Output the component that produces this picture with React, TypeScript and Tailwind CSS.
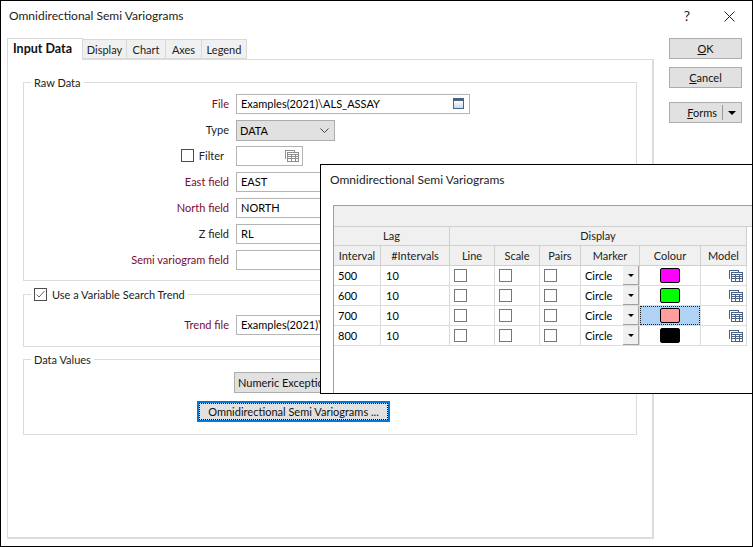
import type { ReactNode } from 'react';

const rows = [
  { interval: '500', colour: 'bg-[#ff00ff]' },
  { interval: '600', colour: 'bg-[#00ff00]' },
  { interval: '700', colour: 'bg-[#ff9d9d]', selected: true },
  { interval: '800', colour: 'bg-black' },
];

const inputBox = 'h-[20px] border border-[#b4b4b4] bg-white pl-[4px] pb-[2px] flex items-center text-black';

function TableIcon({ dark = false }: { dark?: boolean }) {
  const c = dark ? '#4a6286' : '#8e8e8e';
  return (
    <svg width="14" height="12" viewBox="0 0 14 12" fill="none" stroke={c} strokeWidth="1" shapeRendering="crispEdges">
      <path d="M0.5 8.5v-8h9v2" />
      <rect x="2.5" y="2.5" width="11" height="9" fill="#fff" />
      <path d="M2.5 4.5h11M2.5 6.5h11M2.5 8.5h11M6.5 4.5v7M10.5 4.5v7" />
    </svg>
  );
}

function Checkbox({ checked = false }: { checked?: boolean }) {
  return (
    <div className="w-[13px] h-[13px] border border-[#4d4d4d] bg-white shrink-0">
      {checked && (
        <svg width="11" height="11" viewBox="0 0 11 11" fill="none" stroke="#666" strokeWidth="1">
          <path d="M1.5 5.5l2.5 2.5 5.5-6" />
        </svg>
      )}
    </div>
  );
}

function Row({ label, required, children }: { label: ReactNode; required?: boolean; children: ReactNode }) {
  return (
    <div className="flex items-center h-[20px]">
      <div className={`w-[205px] pb-[2px] text-right ${required ? 'text-[#7d0a2a]' : 'text-[#222]'}`}>{label}</div>
      <div className="ml-[7px] flex">{children}</div>
    </div>
  );
}

function Group({ title, className, children }: { title: ReactNode; className: string; children: ReactNode }) {
  return (
    <div className={`relative border border-[#dcdcdc] ${className}`}>
      <div className="absolute -top-[10px] left-[7px] bg-white px-[3px] h-[18px] flex items-center text-[#222]">{title}</div>
      {children}
    </div>
  );
}

function SideButton({ children }: { children: ReactNode }) {
  return (
    <div className="h-[21px] w-[73px] border border-[#adadad] bg-[#e1e1e1] flex items-center justify-center text-[#111]">
      {children}
    </div>
  );
}

function HeadCell({ children, className = '' }: { children: ReactNode; className?: string }) {
  return (
    <div className={`bg-[#f0f0f0] border-r border-b border-[#d0d0d0] flex items-center justify-center text-[#222] ${className}`}>
      {children}
    </div>
  );
}

function BodyCell({ children, className = '' }: { children?: ReactNode; className?: string }) {
  return <div className={`h-[20px] border-r border-b border-[#dcdcdc] flex items-center ${className}`}>{children}</div>;
}

function SemiVariogramDialog() {
  return (
    <div className="absolute left-[319px] top-[163px] w-[432px] h-[230px] bg-white border-l border-t border-b border-black flex flex-col">
      <div className="h-[40px] shrink-0 pl-[9px] pt-[9px] text-[12px] text-[#222]">Omnidirectional Semi Variograms</div>
      <div className="ml-[12px] flex-1 border-l border-t border-[#a0a0a0]">
        <div className="h-[21px] bg-[#f0f0f0] border-b border-[#d0d0d0]" />
        <div className="grid grid-cols-[47px_69px_45px_45px_41px_59px_61px_46px] w-[413px]">
          <HeadCell className="col-span-2 h-[19px] pb-[2px]">Lag</HeadCell>
          <HeadCell className="col-span-6 h-[19px] pb-[2px]">Display</HeadCell>
          {['Interval', '#Intervals', 'Line', 'Scale', 'Pairs', 'Marker', 'Colour', 'Model'].map((h) => (
            <HeadCell key={h} className="h-[20px]">{h}</HeadCell>
          ))}
          {rows.map((r) => (
            <div key={r.interval} className="contents">
              <BodyCell className="pl-[4px]">{r.interval}</BodyCell>
              <BodyCell className="pl-[5px]">10</BodyCell>
              <BodyCell className="pl-[4px]"><div className="w-[13px] h-[13px] border border-[#777]" /></BodyCell>
              <BodyCell className="pl-[4px]"><div className="w-[13px] h-[13px] border border-[#777]" /></BodyCell>
              <BodyCell className="pl-[4px]"><div className="w-[13px] h-[13px] border border-[#777]" /></BodyCell>
              <BodyCell className="pl-[4px] justify-between">
                <span>Circle</span>
                <div className="w-[16px] h-[19px] bg-[#f0f0f0] border-r border-b border-[#a0a0a0] flex items-center justify-center">
                  <div className="w-0 h-0 border-x-[3px] border-x-transparent border-t-[3px] border-t-black" />
                </div>
              </BodyCell>
              <BodyCell>
                <div className={`w-full h-full flex items-center justify-center ${r.selected ? 'bg-[#b0d3f5] outline-1 outline-dotted -outline-offset-1 outline-[#222]' : ''}`}>
                  <div className={`w-[20px] h-[15px] rounded-[2px] border border-black ${r.colour}`} />
                </div>
              </BodyCell>
              <BodyCell className="justify-end pr-[3px]"><TableIcon dark /></BodyCell>
            </div>
          ))}
        </div>
      </div>
    </div>
  );
}

export default function App() {
  return (
    <div
      className="relative w-[753px] h-[547px] bg-white border border-black overflow-hidden flex flex-col text-[11px] leading-none"
      style={{ fontFamily: 'Lato, "Noto Sans", sans-serif' }}
    >
      <div className="h-[37px] shrink-0 flex items-start relative">
        <div className="pl-[8px] pt-[9px] text-[12px] text-[#222]">Omnidirectional Semi Variograms</div>
        <div className="ml-auto flex items-center pt-[8px] pr-[17px] gap-[34px]">
          <span className="text-[14px] text-[#222]">?</span>
          <svg width="11" height="11" viewBox="0 0 11 11" stroke="#222" strokeWidth="1" fill="none">
            <path d="M0.5 0.5l10 10M10.5 0.5l-10 10" />
          </svg>
        </div>
      </div>

      <div className="flex flex-1 pl-[6px]">
        <div className="w-[647px] flex flex-col">
          <div className="flex items-end h-[22px] shrink-0 relative z-10">
            <div className="w-[76px] h-[22px] bg-white border border-b-0 border-[#d9d9d9] pl-[5px] flex items-center font-bold text-[12.5px] text-[#111]">Input Data</div>
            {[['Display', 'w-[44px]'], ['Chart', 'w-[39px]'], ['Axes', 'w-[36px]'], ['Legend', 'w-[45px]']].map(([t, w]) => (
              <div key={t} className={`${w} h-[20px] mb-[1px] bg-[#f0f0f0] border-y border-r border-[#d9d9d9] flex items-center justify-center text-[#222]`}>{t}</div>
            ))}
          </div>
          <div className="h-[480px] -mt-[1px] border border-r-2 border-b-2 border-[#dcdcdc] pl-[15px] pt-[22px] flex flex-col">
            <Group title="Raw Data" className="w-[614px] h-[199px] pt-[11px] flex flex-col gap-[6px]">
              <Row label="File" required>
                <div className={`${inputBox} w-[234px] justify-between pr-[5px]`}>
                  <span>Examples(2021)\ALS_ASSAY</span>
                  <div className="w-[11px] h-[11px] border border-[#4a6286] border-t-[3px] bg-gradient-to-b from-white to-[#c8d8ee]" />
                </div>
              </Row>
              <Row label="Type">
                <div className="h-[21px] w-[99px] bg-[#e1e1e1] border border-[#adadad] pl-[3px] pr-[5px] flex items-center justify-between text-black">
                  <span>DATA</span>
                  <svg width="9" height="5" viewBox="0 0 9 5" fill="none" stroke="#444"><path d="M0.5 0.5l4 4 4-4" /></svg>
                </div>
              </Row>
              <Row
                label={
                  <div className="flex items-center justify-end gap-[5px] pr-[5px]">
                    <Checkbox />
                    <span>Filter</span>
                  </div>
                }
              >
                <div className="h-[20px] w-[67px] border border-[#b4b4b4] flex items-center justify-end pr-[3px]"><TableIcon /></div>
              </Row>
              <Row label="East field" required><div className={`${inputBox} w-[234px]`}>EAST</div></Row>
              <Row label="North field" required><div className={`${inputBox} w-[234px]`}>NORTH</div></Row>
              <Row label="Z field"><div className={`${inputBox} w-[234px]`}>RL</div></Row>
              <Row label="Semi variogram field" required><div className={`${inputBox} w-[234px]`} /></Row>
            </Group>

            <Group
              title={
                <div className="flex items-center gap-[5px]">
                  <Checkbox checked />
                  <span>Use a Variable Search Trend</span>
                </div>
              }
              className="w-[614px] h-[53px] mt-[13px] pt-[20px]"
            >
              <Row label="Trend file" required><div className={`${inputBox} w-[234px]`}>Examples(2021)\ALS_ASSAY</div></Row>
            </Group>

            <Group title="Data Values" className="w-[614px] h-[76px] mt-[12px] pt-[12px] flex flex-col">
              <div className="ml-[210px] w-[119px] h-[21px] bg-[#e1e1e1] border border-[#adadad] pl-[3px] flex items-center text-[#111] whitespace-nowrap">Numeric Exceptions</div>
              <div className="ml-[173px] mt-[8px] w-[193px] h-[21px] bg-[#e1e1e1] border-2 border-[#0078d7] flex items-center justify-center text-[#111] whitespace-nowrap outline-1 outline-dotted -outline-offset-3 outline-black">
                Omnidirectional Semi Variograms ...
              </div>
            </Group>
          </div>
        </div>

        <div className="ml-[15px] pt-0 flex flex-col">
          <SideButton><span><u>O</u>K</span></SideButton>
          <div className="mt-[8px]"><SideButton><span><u>C</u>ancel</span></SideButton></div>
          <div className="mt-[14px] h-[21px] w-[73px] border border-[#adadad] bg-[#e1e1e1] flex items-center justify-end text-[#111]">
            <span><u>F</u>orms</span>
            <div className="ml-[5px] w-[1px] h-[15px] bg-[#9a9a9a]" />
            <div className="mx-[5px] w-0 h-0 border-x-[4px] border-x-transparent border-t-[4px] border-t-black" />
          </div>
        </div>
      </div>

      <SemiVariogramDialog />
    </div>
  );
}
